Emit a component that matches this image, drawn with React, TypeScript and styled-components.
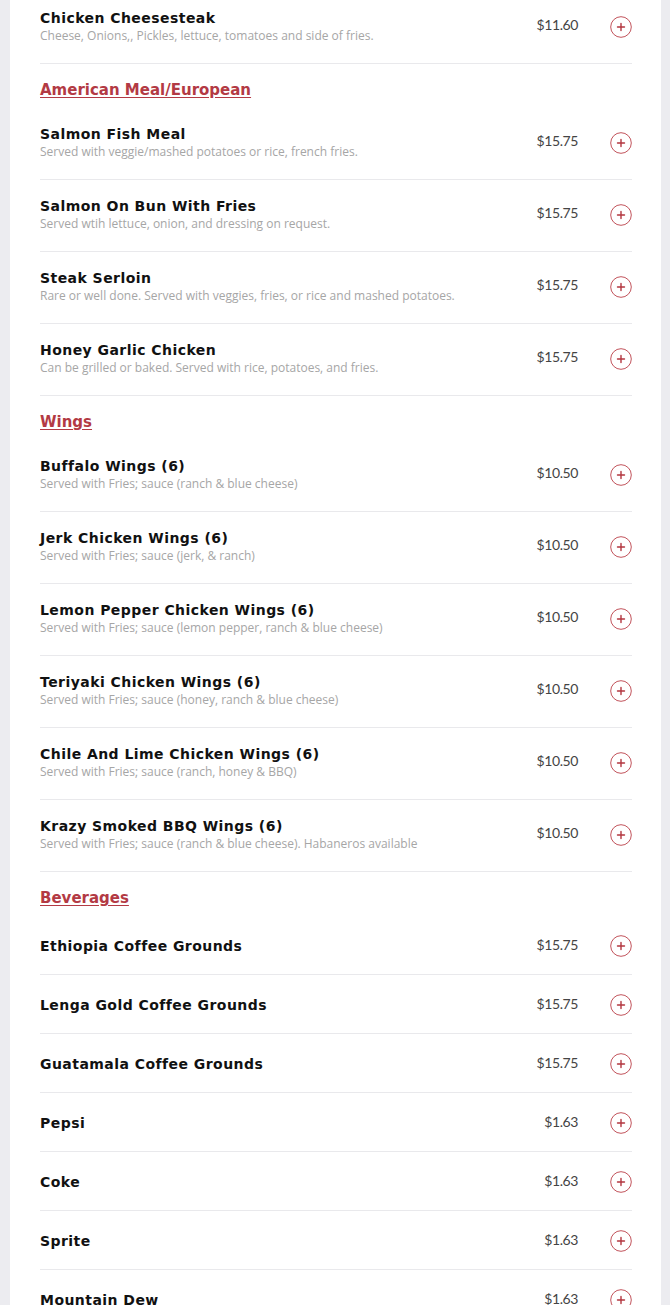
import React from 'react';
import styled, { createGlobalStyle } from 'styled-components';

const GlobalStyle = createGlobalStyle`
  html, body {
    margin: 0;
    padding: 0;
    background: #ececf0;
  }
  * {
    box-sizing: border-box;
  }
`

const Page = styled.main`
  padding: 0 9px 0 10px;
  overflow: hidden;
`

const Panel = styled.div`
  background: #ffffff;
  padding: 0 29px 0 30px;
  margin-top: -8px;
`

const Heading = styled.h2`
  margin: 0;
  padding: 17px 0 9px;
  font-family: 'DejaVu Sans', sans-serif;
  font-weight: 700;
  font-size: 15px;
  line-height: 18px;
  color: #b33a44;
  text-decoration: underline;
  text-underline-offset: 2px;
`

const Row = styled.div<{ $plain?: boolean }>`
  display: flex;
  flex-flow: row nowrap;
  align-items: center;
  padding: ${({ $plain }) => ($plain ? '19px 0 17px' : '17px 0 19px')};
  border-bottom: 1px solid #e9e9ec;
`

const Info = styled.div`
  flex: 1 1 auto;
  min-width: 0;
`

const Name = styled.div`
  font-family: 'DejaVu Sans', sans-serif;
  font-weight: 700;
  font-size: 14px;
  line-height: 18px;
  letter-spacing: 0.45px;
  color: #111111;
`

const Desc = styled.div`
  font-family: 'Open Sans', sans-serif;
  font-size: 12px;
  line-height: 17px;
  color: #a6a6a6;
`

const Price = styled.div`
  font-family: Lato, sans-serif;
  font-size: 14px;
  line-height: 18px;
  letter-spacing: -0.4px;
  color: #444444;
  margin: -3px 32px 0 12px;
`

const AddButton = styled.button`
  display: flex;
  align-items: center;
  justify-content: center;
  width: 22px;
  height: 22px;
  padding: 0;
  border: none;
  background: none;
  cursor: pointer;
`

type Item = { name: string; desc?: string; price: string }
type Section = { title?: string; items: Item[] }

const wingsSauce = 'Served with Fries; sauce '

const menu: Section[] = [
  {
    items: [
      { name: 'Chicken Cheesesteak', desc: 'Cheese, Onions,, Pickles, lettuce, tomatoes and side of fries.', price: '$11.60' },
    ],
  },
  {
    title: 'American Meal/European',
    items: [
      { name: 'Salmon Fish Meal', desc: 'Served with veggie/mashed potatoes or rice, french fries.', price: '$15.75' },
      { name: 'Salmon On Bun With Fries', desc: 'Served wtih lettuce, onion, and dressing on request.', price: '$15.75' },
      { name: 'Steak Serloin', desc: 'Rare or well done. Served with veggies, fries, or rice and mashed potatoes.', price: '$15.75' },
      { name: 'Honey Garlic Chicken', desc: 'Can be grilled or baked. Served with rice, potatoes, and fries.', price: '$15.75' },
    ],
  },
  {
    title: 'Wings',
    items: [
      { name: 'Buffalo Wings (6)', desc: wingsSauce + '(ranch & blue cheese)', price: '$10.50' },
      { name: 'Jerk Chicken Wings (6)', desc: wingsSauce + '(jerk, & ranch)', price: '$10.50' },
      { name: 'Lemon Pepper Chicken Wings (6)', desc: wingsSauce + '(lemon pepper, ranch & blue cheese)', price: '$10.50' },
      { name: 'Teriyaki Chicken Wings (6)', desc: wingsSauce + '(honey, ranch & blue cheese)', price: '$10.50' },
      { name: 'Chile And Lime Chicken Wings (6)', desc: wingsSauce + '(ranch, honey & BBQ)', price: '$10.50' },
      { name: 'Krazy Smoked BBQ Wings (6)', desc: wingsSauce + '(ranch & blue cheese). Habaneros available', price: '$10.50' },
    ],
  },
  {
    title: 'Beverages',
    items: [
      { name: 'Ethiopia Coffee Grounds', price: '$15.75' },
      { name: 'Lenga Gold Coffee Grounds', price: '$15.75' },
      { name: 'Guatamala Coffee Grounds', price: '$15.75' },
      { name: 'Pepsi', price: '$1.63' },
      { name: 'Coke', price: '$1.63' },
      { name: 'Sprite', price: '$1.63' },
      { name: 'Mountain Dew', price: '$1.63' },
    ],
  },
]

function PlusIcon() {
  return (
    <svg width="22" height="22" viewBox="0 0 22 22" fill="none">
      <circle cx="11" cy="11" r="10.3" stroke="#c2545c" strokeWidth="1" />
      <path d="M11 7.5v7M7.5 11h7" stroke="#b3363f" strokeWidth="1.4" strokeLinecap="round" />
    </svg>
  )
}

function MenuRow({ item }: { item: Item }) {
  return (
    <Row $plain={!item.desc}>
      <Info>
        <Name>{item.name}</Name>
        {item.desc && <Desc>{item.desc}</Desc>}
      </Info>
      <Price>{item.price}</Price>
      <AddButton aria-label={'Add ' + item.name}>
        <PlusIcon />
      </AddButton>
    </Row>
  )
}

export default function App() {
  return (
    <Page>
      <GlobalStyle />
      <Panel>
        {menu.map((section, i) => (
          <section key={i}>
            {section.title && <Heading>{section.title}</Heading>}
            {section.items.map((item) => (
              <MenuRow key={item.name} item={item} />
            ))}
          </section>
        ))}
      </Panel>
    </Page>
  )
}
